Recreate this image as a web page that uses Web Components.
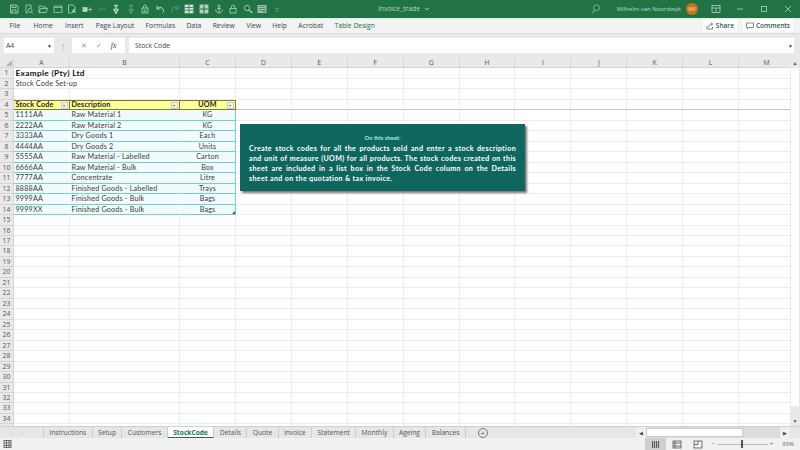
<!DOCTYPE html>
<html><head><meta charset="utf-8"><style>
html,body{margin:0;height:100%;overflow:hidden}
body{width:800px;height:450px;display:flex;flex-direction:column;font-family:"Open Sans","Liberation Sans",sans-serif;background:#fff}
</style></head><body>
<x-titlebar></x-titlebar>
<x-ribbon></x-ribbon>
<x-formula></x-formula>
<x-sheet></x-sheet>
<x-tabs></x-tabs>
<x-status></x-status>
<script>
const def=(n,html,init)=>customElements.define(n,class extends HTMLElement{connectedCallback(){if(this.shadowRoot)return;const s=this.attachShadow({mode:'open'});s.innerHTML=html;init&&init(s)}});
const ic=(d,o=1,extra='')=>`<svg width="10" height="10" viewBox="0 0 10 10" fill="none" stroke="#b4d2c1" stroke-width=".8" opacity="${o}">${d}${extra}</svg>`;
const tIcons=[
['<path d="M1.5 1h6l1.5 1.5V9h-7.5zM3 1v2.5h4V1M3 9V6h4v3"/>',1],
['<path d="M2 1h5v3M2 1v8h2"/><circle cx="6" cy="6.5" r="2"/><path d="M7.5 8 9 9.5"/>',1],
['<path d="M1 8.5V2h3l1 1h3v1.5M1 8.5 2.5 4.5H9.500L8 8.500z"/>',1],
['<rect x="1" y="2" width="8" height="6.500"/><path d="M1 3.500h8"/>',.9],
['<path d="M1.500 1H6l2 2v3M1.500 1v8h3"/><path d="M5 9 6.800 5 8.500 9M5.700 7.800h2.200" stroke-width="1"/>',1],
['<rect x="1" y="3.500" width="4" height="4" fill="#b4d2c1"/><path d="M5 5.500h4.500M7.500 3.500l2 2-2 2"/>',1],
['<path d="M9 5H2M4 3 2 5l2 2"/>',.35],
['<path d="M3 1.500h4M5 1.500v4M3 5.500h4L5 9.500z" stroke-width="1.400"/>',1],
['<path d="M3 1.500h4M5 1.500v4M3 5.500h4L5 9.500z" stroke-width="1.200"/>',.4],
['<rect x="2" y="4" width="6" height="5"/><path d="M3.500 4V2.500a1.500 1.500 0 0 1 3 0V4M3.500 6h3M3.500 7.500h3"/>',1],
['<path d="M2 1.500V5h3.500M2 5c1-2 5-3 6.500 1 .3 1-.2 2-1 3" stroke-width="1"/>',1],
['<path d="M8 1.500V5H4.500M8 5C7 3 3 2 1.500 6c-.3 1 .2 2 1 3" stroke-width="1"/>',.35],
['<rect x="1" y="1" width="8" height="8" fill="#dbe9e1"/><path d="M1 3.500h8M1 6.200h8M5 1v8" stroke="#217346"/>',1],
['<rect x="1" y="1" width="8" height="8" fill="#b4d2c1"/><path d="M1 5h8M5 1v8" stroke="#217346" stroke-width="1.100"/>',1],
['<circle cx="5" cy="2" r="1"/><path d="M5 3v6M1.500 5.500C2 8 3.500 9 5 9s3-1 3.500-3.500M3 4.500h4"/>',1],
['<rect x="2" y="4.500" width="6" height="4.500"/><path d="M3.300 4.500V3a1.700 1.700 0 0 1 3.400 0v1.500"/>',1],
['<circle cx="4" cy="4" r="2.700"/><path d="M6 6l3.500 3" stroke-width="1.100"/>',1],
['<rect x="1" y="1.500" width="8" height="7" fill="#4f8f6c"/><path d="M1 3.500h8M1 5.500h8M1 7.500h5"/>',1],
];
const caret=(x)=>`<svg width="6" height="4" viewBox="0 0 6 4" style="margin-left:${x}px"><path d="M1 1l2 2 2-2" fill="none" stroke="#cfe3d7" stroke-width=".8"/></svg>`;
def('x-titlebar',`<style>
:host{display:flex;height:18px;flex:none;background:#217346;align-items:center;color:#c6dccf;font-size:6.8px;position:relative}
.icons{display:flex;gap:4.62px;padding-left:9px;align-items:center}
.t{position:absolute;left:378px;top:4px;display:flex;align-items:center;gap:4px;color:#b6d3c3}
.r{margin-left:auto;display:flex;align-items:center}
.name{margin:0 5px 0 16px;color:#bcd7c8;font-size:6px}
.av{width:12px;height:12px;border-radius:50%;background:#c8741d;color:#f6e3c7;font-size:5px;display:flex;align-items:center;justify-content:center;margin-right:6px}
.w{width:24px;display:flex;justify-content:center;align-items:center}
</style><div class="icons">${tIcons.map(i=>ic(i[0],i[1])).join('')}${ic('<path d="M3 4.500h4M3.500 6 5 7.500 6.500 6"/>',.5)}</div>
<div class="t">invoice_trade ${caret(0)}</div>
<div class="r">${ic('<circle cx="5.500" cy="3.800" r="3"/><path d="M3.500 6.200 1 9.500" stroke-width="1"/>',.8)}<span class="name">Wilhelm van Noordwyk</span><span class="av">WV</span>
<span class="w">${ic('<rect x="1" y="1.500" width="8" height="7"/><path d="M1 4h8M5 4v4.500"/>')}</span><span class="w">${ic('<path d="M2 5h6"/>')}</span><span class="w">${ic('<rect x="2.500" y="2.500" width="5" height="5"/>')}</span><span class="w" style="margin-right:0">${ic('<path d="M2 2l6 6M8 2 2 8"/>')}</span></div>`);
const tabs=['File','Home','Insert','Page Layout','Formulas','Data','Review','View','Help','Acrobat','Table Design'];
def('x-ribbon',`<style>
:host{display:flex;height:15px;flex:none;background:#f3f3f3;border-bottom:1px solid #d8d8d8;font-size:6.800px;color:#444;align-items:center;box-shadow:inset 0 1px 0 #dfeee6}
.tabs{display:flex;gap:11.300px;padding-left:9.500px}
.tabs span:first-child{margin-right:2px}
.tabs span:nth-child(2){margin-right:1px}
.tabs span:nth-child(3){margin-right:1px}
.a{color:#217346}
.r{margin-left:auto;display:flex;gap:6px;padding-right:7px}
.b{background:#fff;height:13px;display:flex;align-items:center;gap:2px;padding:0 3px;color:#33594a;font-weight:600;font-size:6.500px}
svg{display:block}
</style><div class="tabs">${tabs.map((t,i)=>`<span class="${i==10?'a':''}">${t}</span>`).join('')}</div>
<div class="r"><span class="b"><svg width="8" height="8" viewBox="0 0 8 8" fill="none" stroke="#555" stroke-width=".7"><path d="M1 4v3h5.500V5M3 5c0-2 1-3 3-3M5 .8 6.800 2 5 3.500"/></svg>Share</span><span class="b"><svg width="8" height="8" viewBox="0 0 8 8" fill="none" stroke="#555" stroke-width=".7"><path d="M.5 1h7v4.500H3L1.500 7V5.500h-1z"/></svg>Comments</span></div>`);
def('x-formula',`<style>
:host{display:flex;height:24px;flex:none;box-sizing:border-box;background:#e9e9e9;padding:4px 0 5px 4px;font-size:6.800px;color:#444;align-items:stretch}
div{background:#fff;display:flex;align-items:center}
.n{width:50px;padding-left:2px;box-sizing:border-box;justify-content:space-between;padding-right:2px}
.d{background:none;width:18px;justify-content:center;color:#888;font-size:8px;letter-spacing:0}
.x{width:53px;justify-content:space-around;padding:0 4px;box-sizing:border-box;color:#999}
.f{flex:1;margin:0 0 0 4px;padding-left:6px}
.c{background:none;width:6px;color:#444;font-size:5px;justify-content:center}
i{font-family:"Liberation Serif",serif;color:#444;font-size:8px}
</style><div class="n"><span>A4</span><span style="font-size:5px">▼</span></div><div class="d">⋮</div>
<div class="x"><span>✕</span><span>✓</span><i>fx</i></div><div class="f" style="justify-content:space-between;padding-right:1px"><span>Stock Code</span><span style="font-size:5px">▼</span></div><div class="c"></div>`);
const data=[['1111AA','Raw Material 1','KG'],['2222AA','Raw Material 2','KG'],['3333AA','Dry Goods 1','Each'],['4444AA','Dry Goods 2','Units'],['5555AA','Raw Material - Labelled','Carton'],['6666AA','Raw Material - Bulk','Box'],['7777AA','Concentrate','Litre'],['8888AA','Finished Goods - Labelled','Trays'],['9999AA','Finished Goods - Bulk','Bags'],['9999XX','Finished Goods - Bulk','Bags']];
def('x-callout',`<style>
:host{position:absolute;left:240px;top:66px;width:285px;height:67px;box-sizing:border-box;background:#0f665e;box-shadow:1.500px 1.500px 2px #777;padding:9px 9px 0;color:#fff;font:700 7.100px/10.100px Lato,"Open Sans",sans-serif}
.h{text-align:center;color:#a5ede0;font-size:5.800px;line-height:9px;margin-bottom:2px}
.b{letter-spacing:.34px}
::slotted(div){text-align:justify;text-align-last:justify}
::slotted(div.e){text-align-last:left}
</style><div class="h"><slot name="head"></slot></div><div class="b"><slot></slot></div>`);
def('x-sheet',`<style>
:host{display:flex;flex:1;min-height:0;position:relative;overflow:hidden;background:#fff}
.g{display:grid;grid-template-columns:14px 56px 110px 56px repeat(10,55.9px);grid-auto-rows:10.480px;flex:none;width:790px;overflow:hidden;align-content:start;font:7.200px/10px Lato,"Open Sans",sans-serif;letter-spacing:.18px;color:#3c3c3c;align-self:flex-start}
.g>div{box-sizing:border-box;border-right:1px solid #ededed;border-bottom:1px solid #ededed;padding:0 1.500px;white-space:nowrap;line-height:9.500px;position:relative;overflow:visible;min-width:0}
.g>.ch{background:#e9e9e9;text-align:center;color:#555;border-color:#d4d4d4;font:6.800px/9.500px "Open Sans",sans-serif;letter-spacing:0}
.g>.rh{background:#e9e9e9;text-align:center;color:#555;border-color:#d4d4d4;font:6.800px/9.500px "Open Sans",sans-serif;letter-spacing:0;padding:0}
.g>.c{text-align:center}
.g>.t{font:700 8.300px/10px Lato,sans-serif;letter-spacing:.3px;color:#111}
.g>.hd{background:#ffff99;border:1px solid #7b7b36;border-left-width:0;font-weight:700;color:#222;line-height:8px}
.g>.td{background:#f1fbfb;border-bottom:1px solid #74d0cb;border-right:1px solid #f1fbfb}
.g>.tl{border-right:1px solid #74d0cb}
.g>.fz{border-bottom:1px solid #c4c4c4}
.fb{position:absolute;right:1px;top:1px;width:7px;height:7px;background:#f4f4f4;border:1px solid #ccc;box-sizing:border-box}
.fb:after{content:"";position:absolute;left:1px;top:2px;border:1.500px solid transparent;border-top:2px solid #4a5fa5;border-bottom:0}
.grip{position:absolute;right:0;bottom:0;width:0;height:0;border-left:3px solid transparent;border-bottom:3px solid #2c5f5c}
.corner{position:absolute;right:1px;bottom:1px;width:0;height:0;border-left:6px solid transparent;border-bottom:6px solid #b5b5b5}
.sb{width:10px;flex:none;background:#e9e9e9;display:flex;flex-direction:column;align-items:center;font-size:5px;color:#555}
.sb span{height:10px;line-height:10px}
.th{width:8px;height:338px;background:#fff;margin-bottom:auto}
</style><div class="g"></div><div class="sb"><span>▲</span><div class="th"></div><span>▼</span></div>
<x-callout><span slot="head">On this sheet:</span><div>Create stock codes for all the products sold and enter a stock description</div><div>and unit of measure (UOM) for all products. The stock codes created on this</div><div>sheet are included in a list box in the Stock Code column on the Details</div><div class="e">sheet and on the quotation &amp; tax invoice.</div></x-callout>`,s=>{
 const g=s.querySelector('.g');let h='<div class="ch"><span class="corner"></span></div>';
 'ABCDEFGHIJKLM'.split('').forEach(c=>h+=`<div class="ch">${c}</div>`);
 for(let r=1;r<=35;r++){
  h+=`<div class="rh">${r<35?r:''}</div>`;
  for(let c=0;c<13;c++){
   let cls='',txt='';
   if(r==1&&c==0){cls='t';txt='Example (Pty) Ltd'}
   else if(r==2&&c==0){txt='Stock Code Set-up'}
   else if(r==4&&c<3){cls='hd'+(c==2?' c':'');txt=['Stock Code','Description','UOM'][c]+'<span class="fb"></span>'}
   else if(r>=5&&r<=14&&c<3){cls='td'+(c==2?' c tl':'');txt=data[r-5][c];if(r==14&&c==2)txt+='<span class="grip"></span>'}
   else if(r==4){cls='fz'}
   h+=`<div class="${cls}">${txt}</div>`;
  }
 }
 g.innerHTML=h;
});
const sheets=[['Instructions',0],['Setup'],['Customers'],['StockCode',1],['Details'],['Quote'],['Invoice'],['Statement'],['Monthly'],['Ageing'],['Balances']];
def('x-tabs',`<style>
:host{display:flex;height:12px;flex:none;background:#e6e6e6;border-top:1px solid #cfcfcf;box-sizing:border-box;font-size:6.700px;color:#555;align-items:stretch;position:relative}
.nav{width:44px;flex:none;display:flex;gap:9px;padding-left:10px;box-sizing:border-box;color:#aaa;font-size:6px;align-items:center;border-right:1px solid #ccc}
.list{display:flex;flex:none;align-items:stretch}
.list span{padding:0 5.350px;border-right:1px solid #ccc;display:flex;align-items:center;white-space:nowrap}
.list .on{background:#fff;color:#217346;font-weight:700;border-bottom:1.500px solid #217346}
.plus{width:8px;height:8px;border:1px solid #777;border-radius:50%;margin:1px 0 0 12px;display:flex;align-items:center;justify-content:center;font-size:7px;line-height:1;color:#555;box-sizing:content-box;align-self:center}
.hs{position:absolute;left:636px;right:10px;top:0;bottom:0;display:flex;align-items:center;font-size:5px;color:#444;background:#dcdcdc}
.hs b{width:10px;text-align:center;font-weight:400;background:#efefef;height:100%;display:flex;align-items:center;justify-content:center}
.hs i{width:97px;height:9px;background:#fff;border:1px solid #ccc;box-sizing:border-box}
.hs u{flex:1}
</style><div class="nav"><span>‹</span><span>›</span></div>
<div class="list">${sheets.map(t=>`<span class="${t[1]?'on':''}">${t[0]}</span>`).join('')}</div><div class="plus">+</div>
<div class="hs"><b>◀</b><i></i><u></u><b>▶</b></div>`);
const vw=(d)=>`<svg width="10" height="9" viewBox="0 0 10 9" fill="none" stroke="#555" stroke-width=".8">${d}</svg>`;
def('x-status',`<style>
:host{display:flex;height:12px;flex:none;background:#f1f1f1;align-items:center;font-size:6px;color:#666}
.m{margin-left:3px}
.r{margin-left:auto;display:flex;align-items:center;height:100%}
.v{width:21px;height:100%;display:flex;align-items:center;justify-content:center}
.on{background:#cfcfcf}
.z{display:flex;align-items:center;width:62px;margin:0 3px 0 3px;gap:2px;color:#666;justify-content:space-between}
.z div{flex:1;height:1px;background:#bbb;position:relative}
.z div:after{content:"";position:absolute;left:24px;top:-3.500px;width:2px;height:8px;background:#555}
</style><svg class="m" width="10" height="10" viewBox="0 0 10 10" fill="none" stroke="#555" stroke-width=".8"><rect x="1" y="1.500" width="7" height="7"/><path d="M1 4h7M1 6.500h7M3.500 1.500v7M6 1.500v7"/></svg>
<div class="r"><span class="v on">${vw('<path d="M1.500 1v7M3.500 1v7M5.500 1v7M7.500 1v7" stroke-width="1.100"/>')}</span><span class="v">${vw('<rect x="1" y="1" width="8" height="7"/><path d="M1 3h8M1 6h8M3 1v7"/>')}</span><span class="v">${vw('<rect x="1" y="1" width="8" height="7"/><path d="M5 1v3.500H1"/>')}</span>
<span class="z"><span>−</span><div></div><span>+</span></span><span style="margin:0 6px 0 6px">93%</span></div>`);
</script></body></html>
